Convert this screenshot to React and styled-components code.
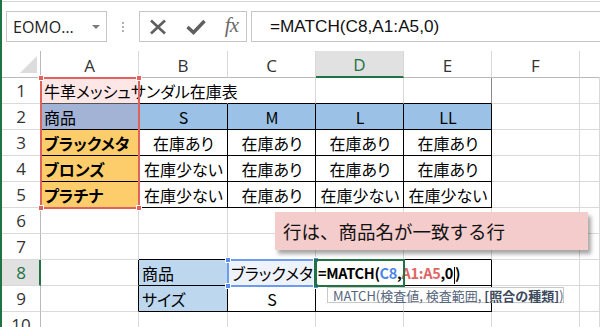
import React from 'react';
import styled, { createGlobalStyle } from 'styled-components';

const Global = createGlobalStyle`
  html, body { margin: 0; padding: 0; background: #fff; }
  body { width: 600px; height: 327px; overflow: hidden; }
  * { box-sizing: border-box; }
`;

const GRID = '#d9d9d9';
const HEAD_LINE = '#b9b9b9';
const BLACK = '#000';
const GREEN = '#217346';
const CJK = `"Noto Sans CJK JP", "Noto Sans", sans-serif`;
const UI = `"Open Sans", "Noto Sans", "Noto Sans CJK JP", sans-serif`;

const Window = styled.div`
  width: 600px;
  height: 327px;
  overflow: hidden;
  border-left: 2px solid ${GREEN};
  display: flex;
  flex-direction: column;
  background: #fff;
`;

const Toolbar = styled.div`
  margin-top: 1px;
  border-top: 1px solid #d4d4d4;
  height: 50px;
  padding: 9px 0 0 4px;
  display: flex;
  align-items: flex-start;
  flex: none;
`;

const NameBox = styled.div`
  width: 101px;
  height: 31px;
  border: 1px solid #c6c6c6;
  display: flex;
  align-items: center;
  justify-content: space-between;
  padding: 0 6px 0 6px;
  font-family: ${UI};
  font-size: 16px;
  color: #222;
`;

const Caret = styled.span`
  width: 0;
  height: 0;
  border-left: 4px solid transparent;
  border-right: 4px solid transparent;
  border-top: 4px solid #7a7a7a;
`;

const Dots = styled.div`
  width: 32px;
  height: 31px;
  display: flex;
  flex-direction: column;
  align-items: center;
  justify-content: center;
  gap: 2px;
  & > span {
    width: 2px;
    height: 2px;
    background: #b0b0b0;
  }
`;

const FxBox = styled.div`
  width: 108px;
  height: 31px;
  border: 1px solid #c6c6c6;
  display: flex;
  align-items: center;
  justify-content: space-between;
  padding: 0 8px 0 9px;
`;

const FxText = styled.span`
  font-family: "Liberation Serif", "DejaVu Serif", serif;
  font-style: italic;
  font-size: 21px;
  color: #6a6a6a;
  letter-spacing: -1px;
  margin-top: -3px;
`;

const FormulaInput = styled.div`
  flex: 1;
  margin-left: 4px;
  margin-right: -10px;
  height: 31px;
  border: 1px solid #c6c6c6;
  display: flex;
  align-items: center;
  padding-left: 18px;
  font-family: "Liberation Sans", Arial, sans-serif;
  font-size: 17.2px;
  color: #111;
`;

const Sheet = styled.div`
  position: relative;
  display: grid;
  grid-template-columns: 39px 98px 89px 88px 88px 88px 88px 1fr;
  grid-template-rows: 27px repeat(10, 26px);
  flex: none;
`;

const Corner = styled.div`
  grid-row: 1;
  grid-column: 1;
  border-right: 1px solid ${HEAD_LINE};
  border-bottom: 1px solid ${HEAD_LINE};
  position: relative;
  &::after {
    content: '';
    position: absolute;
    right: 3px;
    bottom: 4px;
    width: 0;
    height: 0;
    border-left: 17px solid transparent;
    border-bottom: 17px solid #dcdcdc;
  }
`;

const ColHead = styled.div`
  grid-row: 1;
  grid-column: ${(p) => p.$c};
  border-right: 1px solid ${(p) => (p.$last ? 'transparent' : GRID)};
  border-bottom: ${(p) => (p.$active ? `2px solid ${GREEN}` : `1px solid ${HEAD_LINE}`)};
  background: ${(p) => (p.$active ? '#e1e1e1' : '#fff')};
  color: ${(p) => (p.$active ? GREEN : '#333')};
  font-family: ${UI};
  font-size: 17px;
  display: flex;
  align-items: center;
  justify-content: center;
  padding-top: 2px;
`;

const RowHead = styled.div`
  grid-row: ${(p) => p.$r};
  grid-column: 1;
  border-right: ${(p) => (p.$active ? `2px solid ${GREEN}` : `1px solid ${HEAD_LINE}`)};
  border-bottom: 1px solid ${GRID};
  background: ${(p) => (p.$active ? '#e1e1e1' : '#fff')};
  color: ${(p) => (p.$active ? GREEN : '#333')};
  font-family: ${UI};
  font-size: 17px;
  display: flex;
  align-items: center;
  justify-content: center;
  padding-left: ${(p) => (p.$active ? '1px' : '0')};
`;

const Cell = styled.div`
  grid-row: ${(p) => p.$r};
  grid-column: ${(p) => p.$c};
  border-right: 1px solid ${(p) => p.$br || GRID};
  border-bottom: 1px solid ${(p) => p.$bb || GRID};
  background: ${(p) => p.$bg || 'transparent'};
  font-family: ${CJK};
  font-feature-settings: "palt";
  font-size: 16px;
  font-weight: ${(p) => (p.$bold ? 700 : 400)};
  color: #000;
  display: flex;
  align-items: center;
  justify-content: ${(p) => (p.$align === 'center' ? 'center' : 'flex-start')};
  padding: 1px 2px 0 3px;
  white-space: nowrap;
  overflow: visible;
  min-width: 0;
  z-index: ${(p) => (p.$over ? 1 : 'auto')};
`;

const Range = styled.div`
  grid-column: ${(p) => p.$col};
  grid-row: ${(p) => p.$row};
  margin: -1px -1px -1px -1px;
  border: 2px solid ${(p) => p.$color};
  position: relative;
  pointer-events: none;
  z-index: 2;
`;

const Handle = styled.span`
  position: absolute;
  width: 6px;
  height: 6px;
  background: ${(p) => p.$color};
  border: 1px solid #fff;
  ${(p) => (p.$top ? 'top: -4px;' : 'bottom: -4px;')}
  ${(p) => (p.$left ? 'left: -4px;' : 'right: -4px;')}
`;

const Active = styled.div`
  grid-column: 5;
  grid-row: 9;
  margin: -1px -1px -1px -2px;
  border: 2px solid ${GREEN};
  border-left-width: 3px;
  pointer-events: none;
  z-index: 3;
`;

const Callout = styled.div`
  position: absolute;
  left: 273px;
  top: 161px;
  width: 313px;
  height: 38px;
  background: #f4cccc;
  box-shadow: 3px 4px 4px rgba(0, 0, 0, 0.35);
  display: flex;
  align-items: center;
  padding-left: 8px;
  font-family: ${CJK};
  font-size: 18.5px;
  color: #111;
  z-index: 4;
`;

const Tooltip = styled.div`
  position: absolute;
  left: 325px;
  top: 236px;
  width: 237px;
  height: 16px;
  background: #fff;
  border: 1px solid #c8c8c8;
  display: flex;
  align-items: center;
  padding-left: 5px;
  font-family: ${CJK};
  font-size: 13px;
  color: #56657c;
  white-space: nowrap;
  z-index: 5;
  & b { font-weight: 700; color: #3d4a5e; }
`;

const Ref = styled.span`
  color: ${(p) => p.$c};
`;

const TextCaret = styled.span`
  display: inline-block;
  width: 1px;
  height: 17px;
  background: #000;
  vertical-align: middle;
  margin: 0 0 0 1px;
`;

const FormulaCell = styled.span`
  font-size: 14.5px;
  font-weight: 700;
  letter-spacing: -0.3px;
  margin-left: -1px;
`;

const cols = ['A', 'B', 'C', 'D', 'E', 'F', ''];

const pinkA = '#fde6e6';
const blueH = '#9bc2e6';
const orange = '#fecd6b';
const blueL = '#bdd7ee';

const rows = [
  [
    { t: '牛革メッシュサンダル在庫表', bg: pinkA, bb: '#555', br: 'transparent', over: true },
    { bb: BLACK, br: 'transparent' },
    { bb: BLACK },
    { bb: BLACK },
    { bb: BLACK, br: '#8a8a8a' },
    {},
    {},
  ],
  [
    { t: '商品', bg: '#a3b3d6', br: BLACK, bb: BLACK },
    { t: 'S', bg: blueH, align: 'center', br: BLACK, bb: BLACK },
    { t: 'M', bg: blueH, align: 'center', br: BLACK, bb: BLACK },
    { t: 'L', bg: blueH, align: 'center', br: BLACK, bb: BLACK },
    { t: 'LL', bg: blueH, align: 'center', br: BLACK, bb: BLACK },
    {},
    {},
  ],
  [
    { t: 'ブラックメタ', bg: orange, bold: true, br: BLACK, bb: BLACK },
    { t: '在庫あり', align: 'center', br: BLACK, bb: BLACK },
    { t: '在庫あり', align: 'center', br: BLACK, bb: BLACK },
    { t: '在庫あり', align: 'center', br: BLACK, bb: BLACK },
    { t: '在庫あり', align: 'center', br: BLACK, bb: BLACK },
    {},
    {},
  ],
  [
    { t: 'ブロンズ', bg: orange, bold: true, br: BLACK, bb: BLACK },
    { t: '在庫少ない', align: 'center', br: BLACK, bb: BLACK },
    { t: '在庫あり', align: 'center', br: BLACK, bb: BLACK },
    { t: '在庫あり', align: 'center', br: BLACK, bb: BLACK },
    { t: '在庫あり', align: 'center', br: BLACK, bb: BLACK },
    {},
    {},
  ],
  [
    { t: 'プラチナ', bg: orange, bold: true, br: BLACK, bb: BLACK },
    { t: '在庫少ない', align: 'center', br: BLACK, bb: BLACK },
    { t: '在庫あり', align: 'center', br: BLACK, bb: BLACK },
    { t: '在庫少ない', align: 'center', br: BLACK, bb: BLACK },
    { t: '在庫少ない', align: 'center', br: BLACK, bb: BLACK },
    {},
    {},
  ],
  [{}, {}, {}, {}, {}, {}, {}],
  [{}, { bb: BLACK }, { bb: BLACK }, { bb: BLACK }, { bb: BLACK }, {}, {}],
  [
    { br: BLACK },
    { t: '商品', bg: blueL, br: BLACK, bb: BLACK },
    { t: 'ブラックメタ', bg: '#eef2fb', align: 'center', br: BLACK, bb: BLACK },
    { formula: true, br: 'transparent', bb: BLACK, over: true },
    { br: BLACK, bb: BLACK },
    {},
    {},
  ],
  [
    { br: BLACK },
    { t: 'サイズ', bg: blueL, br: BLACK, bb: BLACK },
    { t: 'S', align: 'center', br: BLACK, bb: BLACK },
    { br: GRID, bb: BLACK },
    { br: BLACK, bb: BLACK },
    {},
    {},
  ],
  [{}, {}, {}, {}, {}, {}, {}],
];

function XIcon() {
  return (
    <svg width="18" height="16" viewBox="0 0 18 16">
      <path d="M2 1.5 L16 14.5 M16 1.5 L2 14.5" stroke="#5f5f5f" strokeWidth="2.6" fill="none" />
    </svg>
  );
}

function CheckIcon() {
  return (
    <svg width="20" height="16" viewBox="0 0 20 16">
      <path d="M1.5 8 L7.5 13.5 L18.5 2" stroke="#5f5f5f" strokeWidth="3.4" fill="none" strokeLinejoin="miter" />
    </svg>
  );
}

function FormulaContent() {
  return (
    <FormulaCell>
      =MATCH(<Ref $c="#4a86e8">C8</Ref>,<Ref $c="#e06666">A1:A5</Ref>,0
      <TextCaret />)
    </FormulaCell>
  );
}

export default function App() {
  return (
    <>
      <Global />
      <Window>
        <Toolbar>
          <NameBox>
            <span>EOMO…</span>
            <Caret />
          </NameBox>
          <Dots>
            <span />
            <span />
            <span />
          </Dots>
          <FxBox>
            <XIcon />
            <CheckIcon />
            <FxText>fx</FxText>
          </FxBox>
          <FormulaInput>=MATCH(C8,A1:A5,0)</FormulaInput>
        </Toolbar>
        <Sheet>
          <Corner />
          {cols.map((c, i) => (
            <ColHead key={'h' + i} $c={i + 2} $active={c === 'D'} $last={i === cols.length - 1}>
              {c}
            </ColHead>
          ))}
          {rows.map((r, ri) => (
            <React.Fragment key={'r' + ri}>
              <RowHead $r={ri + 2} $active={ri === 7}>{ri + 1}</RowHead>
              {r.map((c, ci) => (
                <Cell
                  key={ci}
                  $r={ri + 2}
                  $c={ci + 2}
                  $bg={c.bg}
                  $bold={c.bold}
                  $align={c.align}
                  $br={c.br}
                  $bb={c.bb}
                  $over={c.over}
                >
                  {c.formula ? <FormulaContent /> : c.t}
                </Cell>
              ))}
            </React.Fragment>
          ))}
          <Range $col="2" $row="2 / 7" $color="#e0625c">
            <Handle $color="#e0625c" $top $left />
            <Handle $color="#e0625c" $top />
            <Handle $color="#e0625c" $left />
            <Handle $color="#e0625c" />
          </Range>
          <Range $col="4" $row="9" $color="#6d9bef">
            <Handle $color="#5b8ee6" $top $left />
            <Handle $color="#5b8ee6" $top />
            <Handle $color="#5b8ee6" $left />
            <Handle $color="#5b8ee6" />
          </Range>
          <Active />
          <Callout>行は、商品名が一致する行</Callout>
          <Tooltip>
            MATCH(検査値, 検査範囲,&nbsp;<b>[照合の種類]</b>)
          </Tooltip>
        </Sheet>
      </Window>
    </>
  );
}
